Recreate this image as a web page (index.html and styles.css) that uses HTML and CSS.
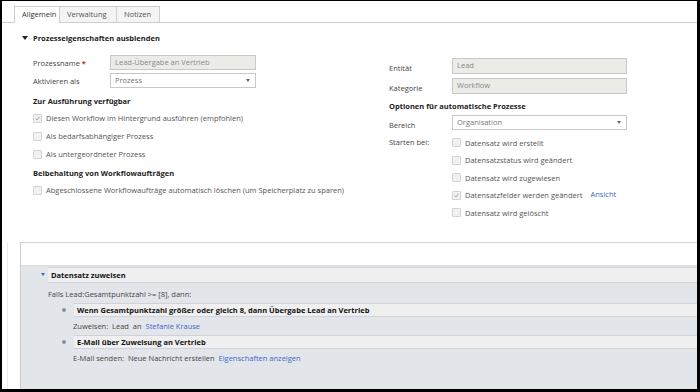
FILE: index.html
```html
<!DOCTYPE html>
<html lang="de">
<head>
<meta charset="utf-8">
<title>Prozess</title>
<link rel="stylesheet" href="styles.css">
</head>
<body>
<div class="frame">
  <div class="tabs">
    <div class="tab active">Allgemein</div>
    <div class="tab">Verwaltung</div>
    <div class="tab">Notizen</div>
  </div>
  <div class="sec-head"><span class="caret"></span>Prozesseigenschaften ausblenden</div>
  <div class="form">
    <div class="col left">
      <div class="field"><span class="lbl">Prozessname <span class="req">*</span></span><div class="input ro">Lead-Übergabe an Vertrieb</div></div>
      <div class="field"><span class="lbl">Aktivieren als</span><div class="input sel">Prozess<span class="arr"></span></div></div>
      <div class="heading">Zur Ausführung verfügbar</div>
      <div class="check on"><span class="box"><svg viewBox="0 0 10 10" width="9" height="9"><path d="M2.2 5.2 L4.2 7.2 L7.8 2.6" fill="none" stroke="#9a9a9a" stroke-width="1.3"/></svg></span>Diesen Workflow im Hintergrund ausführen (empfohlen)</div>
      <div class="check"><span class="box"></span>Als bedarfsabhängiger Prozess</div>
      <div class="check"><span class="box"></span>Als untergeordneter Prozess</div>
      <div class="heading h2">Beibehaltung von Workflowaufträgen</div>
      <div class="check"><span class="box"></span>Abgeschlossene Workflowaufträge automatisch löschen (um Speicherplatz zu sparen)</div>
    </div>
    <div class="col right">
      <div class="field"><span class="lbl">Entität</span><div class="input ro">Lead</div></div>
      <div class="field"><span class="lbl">Kategorie</span><div class="input ro">Workflow</div></div>
      <div class="heading">Optionen für automatische Prozesse</div>
      <div class="field f-sel"><span class="lbl">Bereich</span><div class="input sel">Organisation<span class="arr"></span></div></div>
      <div class="starts">
        <span class="lbl">Starten bei:</span>
        <div class="list">
          <div class="check"><span class="box"></span>Datensatz wird erstellt</div>
          <div class="check"><span class="box"></span>Datensatzstatus wird geändert</div>
          <div class="check"><span class="box"></span>Datensatz wird zugewiesen</div>
          <div class="check on"><span class="box"><svg viewBox="0 0 10 10" width="9" height="9"><path d="M2.2 5.2 L4.2 7.2 L7.8 2.6" fill="none" stroke="#9a9a9a" stroke-width="1.3"/></svg></span>Datensatzfelder werden geändert<a class="link view">Ansicht</a></div>
          <div class="check"><span class="box"></span>Datensatz wird gelöscht</div>
        </div>
      </div>
    </div>
  </div>
  <div class="lower">
    <div class="panel">
      <div class="panel-top"></div>
      <div class="panel-body">
        <div class="step-head"><span class="tri"></span><div class="bar">Datensatz zuweisen</div></div>
        <div class="cond">Falls Lead:Gesamtpunktzahl &gt;= [8], dann:</div>
        <div class="step"><span class="dot"></span><div class="bar">Wenn Gesamtpunktzahl größer oder gleich 8, dann Übergabe Lead an Vertrieb</div></div>
        <div class="desc">Zuweisen:&nbsp; Lead &nbsp;an&nbsp; <a class="link">Stefanie Krause</a></div>
        <div class="step"><span class="dot"></span><div class="bar">E-Mail über Zuweisung an Vertrieb</div></div>
        <div class="desc">E-Mail senden:&nbsp; Neue Nachricht erstellen&nbsp; <a class="link">Eigenschaften anzeigen</a></div>
      </div>
    </div>
  </div>
</div>
</body>
</html>
```
FILE: styles.css
```css
* { box-sizing: border-box; }
html, body { margin: 0; padding: 0; background: #000; }
body {
  width: 700px;
  height: 392px;
  font-family: "Open Sans", "Liberation Sans", sans-serif;
  font-size: 7.5px;
  color: #444;
}
.frame {
  width: 700px;
  height: 392px;
  border-style: solid;
  border-color: #000;
  border-width: 1px 3px 3px 2px;
  background: #fff;
  display: flex;
  flex-direction: column;
  overflow: hidden;
}
.tabs {
  display: flex;
  margin-top: 5px;
  padding-left: 12px;
  border-bottom: 1px solid #cfcfcf;
  height: 17px;
  flex: none;
}
.tab {
  height: 16px;
  line-height: 15px;
  padding: 0 7px;
  border: 1px solid #cfcfcf;
  border-bottom: none;
  border-left: none;
  background: #f4f4f4;
  color: #555;
}
.tab.active {
  background: #fff;
  border-left: 1px solid #cfcfcf;
  height: 17px;
  width: 46px;
  color: #333;
}
.tab:nth-child(2) { width: 57px; }
.tab:nth-child(3) { width: 43px; }
.sec-head {
  margin-top: 9px;
  height: 12px;
  line-height: 12px;
  padding-left: 20px;
  font-weight: 700;
  color: #222;
  display: flex;
  align-items: center;
  flex: none;
}
.caret {
  width: 0; height: 0;
  border-left: 3px solid transparent;
  border-right: 3px solid transparent;
  border-top: 4px solid #222;
  margin-right: 5px;
}
.form {
  display: flex;
  margin-top: 11px;
  padding-left: 31px;
  flex: none;
}
.col.left { width: 356px; }
.col.right { width: 240px; margin-top: 3px; }
.field {
  display: flex;
  align-items: center;
  height: 15px;
  margin-bottom: 3px;
}
.col.right .field { height: 16px; margin-bottom: 4px; }
.col.right .field.f-sel { height: 15px; margin-top: 3px; }
.lbl {
  width: 77px;
  flex: none;
  padding-top: 1px;
  color: #444;
}
.col.right .lbl { width: 63px; padding-top: 3px; }
.col.right .f-sel .lbl { padding-top: 5px; }
.req { color: #d21f1f; font-weight: 700; }
.input {
  width: 146px;
  height: 100%;
  border: 1px solid #c8c8c8;
  padding: 0 4px;
  line-height: 13px;
  color: #888;
  position: relative;
}
.col.right .input { width: 175px; }
.input.ro { background: #ecece7; }
.input.sel { background: #fff; color: #777; }
.arr {
  position: absolute;
  right: 5px;
  top: 5px;
  width: 0; height: 0;
  border-left: 2.5px solid transparent;
  border-right: 2.5px solid transparent;
  border-top: 3.5px solid #666;
}
.heading {
  height: 12px;
  line-height: 12px;
  font-weight: 700;
  color: #222;
  margin-bottom: 2px;
}
.left .heading { margin-top: 7px; }
.left .heading.h2 { margin-top: 4px; }
.col.right .heading { margin-top: 6px; }
.check {
  display: flex;
  align-items: center;
  height: 18px;
  color: #555;
}
.list .check { height: 17.5px; }
.box {
  width: 9px;
  height: 9px;
  border: 1px solid #d4d4d4;
  background: #f1f1f1;
  border-radius: 1px;
  margin-right: 4px;
  flex: none;
  display: flex;
  align-items: center;
  justify-content: center;
}
.box svg { display: block; }
.starts {
  display: flex;
  margin-top: 4px;
}
.starts .lbl { padding-top: 4px; }
.list { display: flex; flex-direction: column; }
.link { color: #3d67c6; }
.view { margin-left: 8px; margin-top: -2px; }
.lower {
  margin-top: 20px;
  margin-left: 5px;
  flex: 1;
  border-left: 1px solid #ececec;
  padding-left: 12px;
  display: flex;
}
.panel {
  flex: 1;
  border-left: 1px solid #c9ccd0;
  border-top: 1px solid #d3d3d3;
  display: flex;
  flex-direction: column;
}
.panel-top { height: 22px; background: #fff; flex: none; }
.panel-body {
  flex: 1;
  background: #e2e6eb;
  border-top: 1px solid #d9dde2;
  padding-top: 1px;
}
.step-head {
  display: flex;
  align-items: center;
  padding-left: 19px;
}
.tri {
  width: 0; height: 0;
  border-left: 2.5px solid transparent;
  border-right: 2.5px solid transparent;
  border-top: 3.5px solid #3d67c6;
  margin-right: 3px;
  margin-left: 1px;
}
.bar {
  flex: 1;
  height: 16px;
  line-height: 14px;
  background: #efefef;
  border-top: 1px solid #cfd3d8;
  border-bottom: 1px solid #cfd3d8;
  padding-left: 3px;
  font-weight: 700;
  color: #111;
}
.step .bar { height: 14px; line-height: 12px; }
.cond {
  height: 12px;
  line-height: 12px;
  margin-top: 5px;
  padding-left: 27px;
  color: #444;
}
.step {
  display: flex;
  align-items: center;
  margin-top: 3px;
  padding-left: 41px;
}
.dot {
  width: 4px;
  height: 4px;
  border-radius: 50%;
  background: #8a8d92;
  margin-right: 8px;
}
.desc {
  height: 12px;
  line-height: 12px;
  margin-top: 3px;
  padding-left: 52px;
  color: #444;
}
```
